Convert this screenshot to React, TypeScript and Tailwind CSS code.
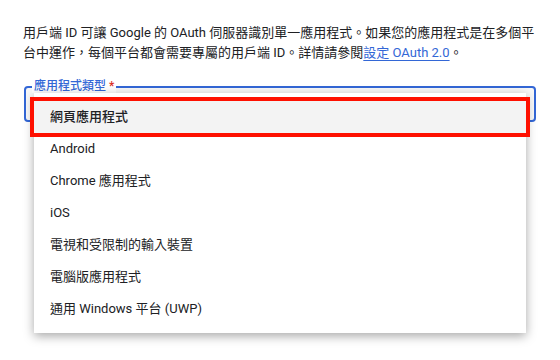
const OPTIONS = [
  "網頁應用程式",
  "Android",
  "Chrome 應用程式",
  "iOS",
  "電視和受限制的輸入裝置",
  "電腦版應用程式",
  "通用 Windows 平台 (UWP)",
];

const FONT = "font-['Roboto','Noto_Sans_CJK_TC',sans-serif]";

export default function App() {
  return (
    <div className={`min-h-[360px] w-[560px] bg-white px-6 pt-[23px] ${FONT}`}>
      <p className="-ml-px text-[13px] leading-[20px] text-[#202124]">
        用戶端 ID 可讓 Google 的 OAuth 伺服器識別單一應用程式。如果您的應用程式是在多個平
        <br />
        台中運作，每個平台都會需要專屬的用戶端 ID。詳情請參閱
        <span className="text-[#3367d6] underline decoration-[#3367d6] underline-offset-[3px]">
          設定 OAuth 2.0
        </span>
        。
      </p>

      <div className="relative mt-[23px] h-[36px] rounded-[4px] border-2 border-[#3367d6] bg-[#f8f8f8]">
        <span className="absolute left-[6px] top-[-9px] bg-white px-[2px] text-[12px] leading-[14px] font-medium text-[#3367d6]">
          應用程式類型 <span className="text-[#d93025]">*</span>
        </span>

        <ul className="absolute left-[8px] top-[5px] z-10 w-[492px] bg-white py-2 shadow-[0_3px_10px_rgba(0,0,0,0.35)]">
          {OPTIONS.map((opt, i) => (
            <li
              key={opt}
              className={
                i === 0
                  ? "flex h-8 items-center bg-[#f3f3f3] px-4 text-[13px] font-medium text-[#202124] outline-4 outline-[#fe1000]"
                  : "flex h-8 items-center px-4 text-[13px] text-[#202124]"
              }
            >
              {opt}
            </li>
          ))}
        </ul>
      </div>
    </div>
  );
}
